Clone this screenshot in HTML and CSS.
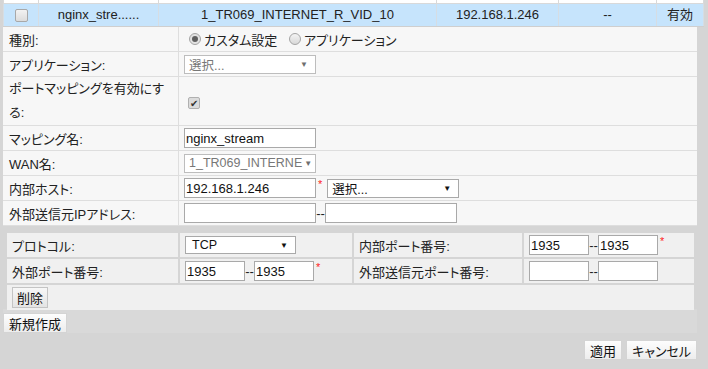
FILE: index.html
```html
<!doctype html>
<html lang="ja">

<head>
    <meta charset="UTF-8">
    <title>ポートマッピング</title>

    <!-- CSS -->
    <link rel="stylesheet" href="styles.css">

</head>

<body>
    <div class="page">
        <table class="list">
            <tr class="prev-row">
                <td class="c-check"></td>
                <td class="c-name"></td>
                <td class="c-wan"></td>
                <td class="c-ip"></td>
                <td class="c-ext"></td>
                <td class="c-state"></td>
            </tr>
            <tr class="selected">
                <td><span class="box"></span></td>
                <td>nginx_stre......</td>
                <td>1_TR069_INTERNET_R_VID_10</td>
                <td>192.168.1.246</td>
                <td>--</td>
                <td>有効</td>
            </tr>
        </table>

        <table class="form">
            <tr>
                <td class="label">種別:</td>
                <td class="value">
                    <label class="choice"><span class="radio checked"></span>カスタム設定</label>
                    <label class="choice"><span class="radio"></span>アプリケーション</label>
                </td>
            </tr>
            <tr>
                <td class="label">アプリケーション:</td>
                <td class="value">
                    <div class="select disabled wide"><span class="val">選択...</span><span class="arrow">▼</span></div>
                </td>
            </tr>
            <tr class="tall">
                <td class="label">ポートマッピングを有効にす<br>る:</td>
                <td class="value"><span class="check"></span></td>
            </tr>
            <tr>
                <td class="label">マッピング名:</td>
                <td class="value"><input class="text wide" type="text" value="nginx_stream"></td>
            </tr>
            <tr>
                <td class="label">WAN名:</td>
                <td class="value">
                    <div class="select disabled wide"><span class="val">1_TR069_INTERNE</span><span class="arrow">▼</span></div>
                </td>
            </tr>
            <tr>
                <td class="label">内部ホスト:</td>
                <td class="value">
                    <div class="line">
                        <input class="text wide" type="text" value="192.168.1.246"><span class="req">*</span>
                        <div class="select wide"><span class="val">選択...</span><span class="arrow">▼</span></div>
                    </div>
                </td>
            </tr>
            <tr>
                <td class="label">外部送信元IPアドレス:</td>
                <td class="value">
                    <div class="line">
                        <input class="text wide" type="text" value=""><span class="dash">--</span><input class="text wide" type="text" value="">
                    </div>
                </td>
            </tr>
        </table>

        <div class="ports-wrap">
            <div class="ports">
                <div class="cell label">プロトコル:</div>
                <div class="cell">
                    <div class="select proto"><span class="val">TCP</span><span class="arrow">▼</span></div>
                </div>
                <div class="cell label">内部ポート番号:</div>
                <div class="cell">
                    <input class="text port" type="text" value="1935"><span class="dash">--</span><input class="text port" type="text" value="1935"><span class="req">*</span>
                </div>

                <div class="cell label">外部ポート番号:</div>
                <div class="cell">
                    <input class="text port" type="text" value="1935"><span class="dash">--</span><input class="text port" type="text" value="1935"><span class="req">*</span>
                </div>
                <div class="cell label">外部送信元ポート番号:</div>
                <div class="cell">
                    <input class="text port" type="text" value=""><span class="dash">--</span><input class="text port" type="text" value="">
                </div>

                <div class="cell actions"><button class="btn">削除</button></div>
            </div>
        </div>

        <div class="add-bar"><button class="btn light">新規作成</button></div>

        <div class="footer">
            <button class="btn light">適用</button>
            <button class="btn light">キャンセル</button>
        </div>
    </div>
</body>
</html>
```

FILE: styles.css
```css
body {
    margin: 0;
    background-color: #d5d5d5;
    font-family: "Liberation Sans", "Noto Sans CJK JP", sans-serif;
    font-size: 13px;
    font-feature-settings: "palt";
    color: #222;
}

.page {
    width: 694px;
    margin-left: 3px;
}

/* list of mappings */
.list {
    width: 694px;
    border-collapse: collapse;
    table-layout: fixed;
}

.list td {
    border: 1px solid #d9d9d9;
    padding: 0;
    text-align: center;
    white-space: nowrap;
    overflow: hidden;
}

.c-check { width: 34px; }
.c-name { width: 119px; }
.c-wan { width: 277px; }
.c-ip { width: 121px; }
.c-ext { width: 97px; }
.c-state { width: 46px; }

.prev-row td {
    height: 3px;
    background-color: #fff;
    border-top: none;
}

.selected td {
    height: 22px;
    background-color: #c6e4fc;
    border-color: #d6dde3;
    border-bottom-color: #cfcfcf;
    line-height: 22px;
}

.box {
    display: inline-block;
    width: 11px;
    height: 11px;
    margin-top: 5px;
    border: 1px solid #a8a8a8;
    border-radius: 2px;
    background: linear-gradient(#f2f2f2, #dcdcdc);
    vertical-align: top;
}

/* edit form */
.form {
    width: 694px;
    border-collapse: collapse;
    background-color: #f7f7f7;
}

.form td {
    height: 24px;
    padding: 0;
    border-bottom: 1px solid #dedede;
}

.form .label {
    width: 169px;
    padding-left: 6px;
    border-right: 1px solid #dedede;
    white-space: nowrap;
}

.form .value {
    padding-left: 5px;
}

.form .tall td {
    height: 48px;
    line-height: 24px;
}

.line {
    display: flex;
    align-items: center;
}

.choice {
    display: inline-flex;
    align-items: center;
    margin-right: 3px;
}

.radio {
    width: 10px;
    height: 10px;
    margin: 0 3px 0 5px;
    border: 1px solid #a5a5a5;
    border-radius: 50%;
    background: linear-gradient(#f4f4f4, #d8d8d8);
    box-sizing: content-box;
    position: relative;
}

.radio.checked {
    background: #e2e2e2;
}

.radio.checked::after {
    content: "";
    position: absolute;
    left: 2px;
    top: 2px;
    width: 6px;
    height: 6px;
    border-radius: 50%;
    background-color: #5f5f5f;
}

.check {
    display: inline-block;
    width: 10px;
    height: 10px;
    margin: 2px 0 0 4px;
    border: 1px solid #b0b0b0;
    border-radius: 2px;
    background-color: #dcdcdc;
    position: relative;
    vertical-align: middle;
}

.check::after {
    content: "✔";
    position: absolute;
    left: 1px;
    top: -6px;
    font-size: 10px;
    color: #333;
}

.text {
    height: 20px;
    box-sizing: border-box;
    border: 1px solid #a9a9a9;
    padding: 0 1px;
    margin: 0;
    font-family: inherit;
    font-size: 13px;
    color: #111;
    background-color: #fff;
    vertical-align: middle;
}

.wide {
    width: 132px;
}

.port {
    width: 60px;
}

.select {
    display: flex;
    align-items: center;
    justify-content: space-between;
    height: 19px;
    box-sizing: border-box;
    padding: 0 7px 0 4px;
    border: 1px solid #a9a9a9;
    background-color: #fff;
    color: #111;
    font-size: 12.5px;
}

.select .val {
    white-space: nowrap;
}

.select .arrow {
    margin-left: 2px;
    font-size: 8px;
    color: #111;
}

.select.disabled {
    border-color: #bdbdbd;
    color: #777;
}

.select.disabled .arrow {
    color: #6f6f6f;
}

.req {
    align-self: flex-start;
    margin: 0 3px 0 2px;
    color: #f22;
    font-size: 11px;
    line-height: 12px;
    vertical-align: top;
}

.line .select {
    margin-left: 2px;
}

.dash {
    display: inline-block;
    width: 9px;
    text-align: center;
    vertical-align: middle;
}

/* ports block */
.ports-wrap {
    padding: 7px 3px 0 4px;
}

.ports {
    display: grid;
    grid-template-columns: 171px 172px 168px 170px;
    grid-auto-rows: 24px;
    gap: 2px;
}

.cell {
    background-color: #f0f0f0;
    display: flex;
    align-items: center;
    padding-left: 5px;
    white-space: nowrap;
}

.cell .req {
    align-self: center;
    margin-top: -8px;
}

.proto {
    width: 111px;
    height: 18px;
    padding-left: 6px;
}

.actions {
    grid-column: 1 / -1;
    height: 25px;
}

.btn {
    height: 21px;
    padding: 0 4px;
    border: 1px solid #c4c4c4;
    background: linear-gradient(#f7f7f7, #e4e4e4);
    font-family: inherit;
    font-size: 13px;
    font-feature-settings: "palt";
    color: #111;
}

.btn.light {
    height: 20px;
    padding: 0 5px;
    border-color: #d4d4d4;
    background: linear-gradient(#fdfdfd, #ededed);
}

.add-bar {
    height: 24px;
    padding-top: 4px;
    box-sizing: border-box;
    background-color: #d9d9d9;
}

.footer {
    display: flex;
    justify-content: flex-end;
    gap: 4px;
    margin-top: 7px;
}
```
